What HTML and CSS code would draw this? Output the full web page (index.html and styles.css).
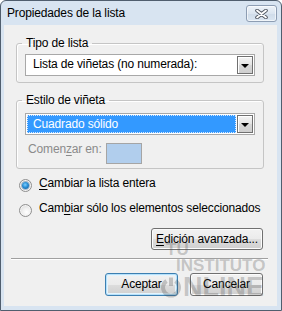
FILE: index.html
```html
<!DOCTYPE html>
<html lang="es">
<head>
<meta charset="utf-8">
<title>Propiedades de la lista</title>
<link rel="stylesheet" href="styles.css">
</head>
<body>
<div class="window">
  <div class="titlebar">
    <span class="title">Propiedades de la lista</span>
    <span class="close" aria-label="Cerrar">
      <svg width="13" height="10" viewBox="0 0 13 10">
        <path d="M2 1.5 L11 8.5 M11 1.5 L2 8.5" stroke="#4f5560" stroke-width="3.6" stroke-linecap="round"/>
        <path d="M2 1.5 L11 8.5 M11 1.5 L2 8.5" stroke="#ffffff" stroke-width="1.8" stroke-linecap="round"/>
      </svg>
    </span>
  </div>
  <div class="content">
    <fieldset class="group g1">
      <legend>Tipo de lista</legend>
      <div class="select">
        <span class="value">Lista de viñetas (no numerada):</span>
        <span class="arrow"><span class="tri"></span></span>
      </div>
    </fieldset>
    <fieldset class="group g2">
      <legend>Estilo de viñeta</legend>
      <div class="select">
        <span class="value selected">Cuadrado sólido</span>
        <span class="arrow"><span class="tri"></span></span>
      </div>
      <div class="start-row">
        <span class="disabled">Comen<u>z</u>ar en:</span>
        <span class="spin"></span>
      </div>
    </fieldset>
    <div class="radios">
      <div class="radio"><span class="dot checked"></span><span><u>C</u>ambiar la lista entera</span></div>
      <div class="radio"><span class="dot"></span><span>Cam<u>b</u>iar sólo los elementos seleccionados</span></div>
    </div>
    <div class="adv-row"><span class="btn adv"><u>E</u>dición avanzada...</span></div>
    <div class="sep"></div>
    <div class="actions">
      <span class="btn default">Aceptar</span>
      <span class="btn">Cancelar</span>
    </div>
    <div class="watermark" aria-hidden="true">
      <span class="wm-tu">TU</span>
      <span class="wm-inst">INSTITUTO</span>
      <span class="wm-online"><svg class="power" width="22" height="22" viewBox="0 0 22 22"><path d="M6.5 5 A8 8 0 1 0 15.5 5" fill="none" stroke="currentColor" stroke-width="4"/><path d="M11 1.5 V10" stroke="currentColor" stroke-width="4"/></svg>NLINE</span>
    </div>
  </div>
</div>
</body>
</html>
```
FILE: styles.css
```css
* { box-sizing: border-box; }
html, body { margin: 0; padding: 0; }
body {
  width: 282px;
  height: 311px;
  overflow: hidden;
  background: #ffffff;
  font-family: "Liberation Sans", Arial, sans-serif;
  font-size: 12px;
  letter-spacing: -0.15px;
  color: #000;
}
u { text-decoration: underline; text-underline-offset: 2px; }

.window {
  width: 282px;
  height: 311px;
  background: #d8e4f1;
  border: 1px solid #505e6e;
  border-radius: 6px 6px 0 0;
  padding: 0 4px 4px 3px;
  display: flex;
  flex-direction: column;
}

.titlebar {
  height: 24px;
  display: flex;
  align-items: flex-start;
  justify-content: space-between;
  flex: none;
}
.title {
  line-height: 15px;
  margin-top: 5px;
  padding-left: 3px;
  color: #000;
}
.close {
  width: 31px;
  height: 17px;
  margin-top: 4px;
  border: 1px solid #8d9db3;
  border-radius: 3px;
  background: linear-gradient(#eef3f9, #dbe5f0 50%, #cfdbe9 51%, #dbe6f2);
  box-shadow: inset 0 0 0 1px rgba(255,255,255,0.6);
  display: flex;
  align-items: center;
  justify-content: center;
}

.content {
  position: relative;
  flex: 1;
  background: #f0f0f0;
  padding: 11px 0 0 0;
  display: flex;
  flex-direction: column;
}

.group {
  margin: 0 13px 0 12px;
  padding: 0 8px 6px 8px;
  border: 1px solid #c5c5c5;
  border-radius: 3px;
  box-shadow: inset 1px 1px 0 #ffffff;
  min-inline-size: 0;
}
.group legend {
  line-height: 14px;
  padding: 0 4px;
  margin-left: -3px;
}
.g2 { margin-top: 10px; padding-bottom: 4px; }

.select {
  height: 22px;
  border: 1px solid #a8a8a8;
  background: #ffffff;
  padding: 1px;
  display: flex;
  margin-top: 4px;
}
.g2 .select { margin-top: 6px; }
.value {
  flex: 1;
  line-height: 16px;
  padding-left: 6px;
  white-space: nowrap;
}
.value.selected {
  background: #3399ff;
  color: #ffffff;
  border: 1px dotted #d7e9ff;
  padding-left: 5px;
  line-height: 16px;
  margin-right: 1px;
}
.arrow {
  width: 16px;
  border: 1px solid #707070;
  background: linear-gradient(#f4f4f4, #e3e3e3 50%, #d6d6d6 51%, #cfcfcf);
  box-shadow: inset 1px 1px 0 #ffffff;
  display: flex;
  align-items: center;
  justify-content: center;
}
.tri {
  width: 0;
  height: 0;
  border-left: 4px solid transparent;
  border-right: 4px solid transparent;
  border-top: 4px solid #000;
  margin-top: 1px;
}

.start-row {
  display: flex;
  align-items: flex-start;
  margin-top: 8px;
}
.disabled {
  color: #8b8b8b;
  width: 81px;
  padding-left: 3px;
  line-height: 15px;
  margin-top: -1px;
}
.spin {
  width: 36px;
  height: 21px;
  background: #b1ceed;
  border: 1px solid #a5a5a5;
}

.radios {
  display: flex;
  flex-direction: column;
  gap: 9px;
  margin-top: 7px;
  padding-left: 15px;
}
.radio {
  display: flex;
  align-items: flex-start;
  line-height: 15px;
  gap: 7px;
}
.dot {
  width: 13px;
  height: 13px;
  margin-top: 3px;
  border-radius: 50%;
  border: 1px solid #8f8f8f;
  background: radial-gradient(circle at 60% 65%, #ffffff 0, #f0f0f0 40%, #d0d0d0 100%);
  box-shadow: inset 0 0 0 1px #f4f4f4;
  position: relative;
  flex: none;
}
.dot.checked::after {
  content: "";
  position: absolute;
  left: 2px;
  top: 2px;
  width: 7px;
  height: 7px;
  border-radius: 50%;
  background: radial-gradient(circle at 45% 40%, #7fd0ff 0, #2a8fd6 45%, #0b4f8e 100%);
  box-shadow: 0 0 0 1px rgba(30,80,130,0.35);
}

.btn {
  display: flex;
  align-items: center;
  justify-content: center;
  height: 22px;
  border: 1px solid #707070;
  border-radius: 3px;
  background: linear-gradient(#f2f2f2, #ebebeb 50%, #dddddd 51%, #cfcfcf);
  box-shadow: inset 0 0 0 1px #fcfcfc;
  line-height: 15px;
  white-space: nowrap;
}
.adv-row {
  display: flex;
  justify-content: flex-end;
  margin-top: 11px;
  padding-right: 14px;
}
.adv { width: 112px; }

.sep {
  margin: 8px 9px 0 7px;
  border-top: 1px solid #a0a0a0;
  border-bottom: 1px solid #ffffff;
}

.actions {
  display: flex;
  justify-content: flex-end;
  gap: 12px;
  margin-top: 13px;
  padding-right: 14px;
}
.actions .btn { width: 73px; height: 23px; }
.btn.default {
  border-color: #3c7fb1;
  box-shadow: inset 0 0 0 1px #b6e1fb, inset 0 0 0 2px #e4f4fd;
}

.watermark {
  position: absolute;
  left: 156px;
  top: 217px;
  display: flex;
  flex-direction: column;
  align-items: flex-start;
  color: rgba(70, 70, 70, 0.27);
  font-family: "Liberation Sans", Arial, sans-serif;
  font-weight: bold;
  letter-spacing: 0;
  pointer-events: none;
}
.wm-tu { font-size: 17px; line-height: 15px; margin-left: 6px; }
.wm-inst { font-size: 17px; line-height: 15px; margin-left: 16px; margin-top: 1px; }
.wm-online {
  font-size: 27px;
  line-height: 24px;
  display: flex;
  align-items: center;
  margin-top: 2px;
}
.power { margin-right: 1px; }
```
